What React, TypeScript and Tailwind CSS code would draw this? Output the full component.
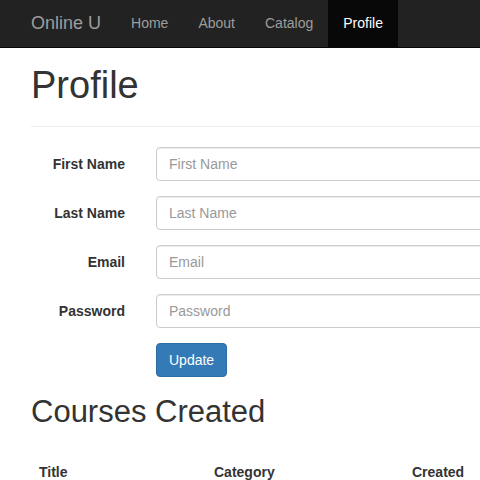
import React from "react";

const font = { fontFamily: '"Liberation Sans", Arial, sans-serif' };

function NavBar() {
  const links = ["Home", "About", "Catalog"];
  return (
    <div className="h-[48px] bg-[#222222] border-b border-[#080808] flex items-stretch pl-[16px]">
      <div className="px-[15px] flex items-center text-[18px] text-[#9d9d9d]">Online U</div>
      {links.map((l) => (
        <div key={l} className="px-[15px] flex items-center text-[14px] text-[#9d9d9d]">
          {l}
        </div>
      ))}
      <div className="px-[15px] flex items-center text-[14px] text-white bg-[#080808]">Profile</div>
    </div>
  );
}

function FormRow({ label }: { label: string }) {
  return (
    <div className="flex items-center gap-[31px] mb-[15px]">
      <label className="w-[94px] text-right text-[14px] font-bold text-[#333333]">{label}</label>
      <input
        placeholder={label}
        className="w-[520px] h-[34px] border border-[#cccccc] rounded-[4px] px-[12px] text-[14px] text-[#555555] placeholder:text-[#999999] shadow-[inset_0_1px_1px_rgba(0,0,0,0.075)] outline-none"
        style={font}
      />
    </div>
  );
}

export default function App() {
  return (
    <div className="w-[480px] h-[480px] overflow-hidden bg-white" style={font}>
      <div className="w-[760px]">
        <NavBar />
        <div className="pl-[31px]">
          <h1 className="mt-[16px] text-[38px] leading-[42px] font-medium text-[#333333] pb-[20px] border-b border-[#eeeeee]">
            Profile
          </h1>
          <form className="mt-[20px]">
            <FormRow label="First Name" />
            <FormRow label="Last Name" />
            <FormRow label="Email" />
            <FormRow label="Password" />
            <div className="pl-[125px]">
              <button
                type="button"
                className="h-[34px] px-[12px] rounded-[4px] bg-[#337ab7] border border-[#2e6da4] text-white text-[14px]"
              >
                Update
              </button>
            </div>
          </form>
          <h2 className="mt-[18px] text-[31px] leading-[34px] font-medium text-[#333333]">Courses Created</h2>
          <div className="mt-[25px] flex text-[14px] font-bold text-[#333333] leading-[20px]">
            <div className="w-[175px] p-[8px]">Title</div>
            <div className="w-[198px] p-[8px]">Category</div>
            <div className="w-[200px] p-[8px]">Created</div>
          </div>
        </div>
      </div>
    </div>
  );
}
